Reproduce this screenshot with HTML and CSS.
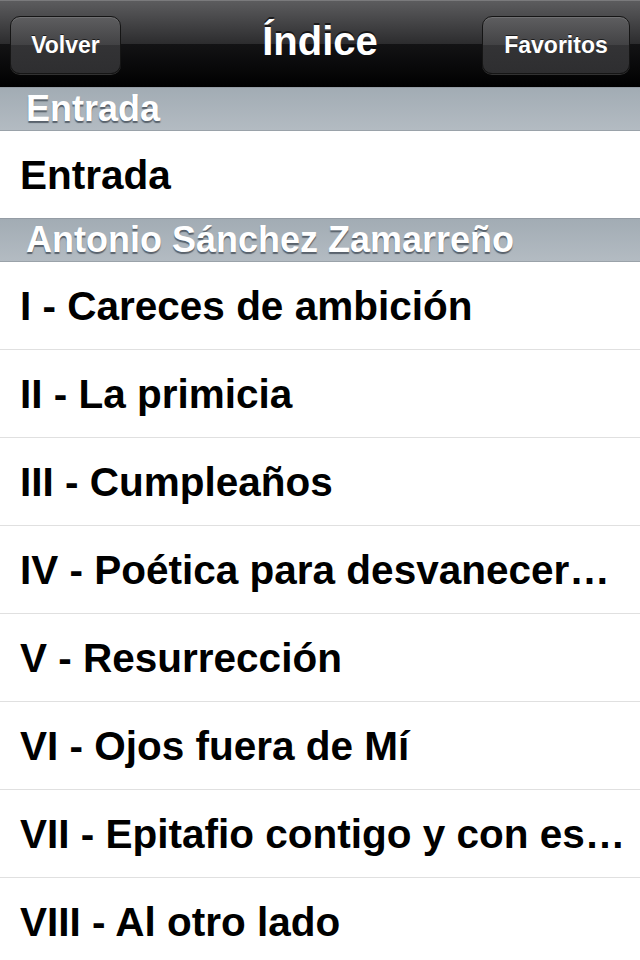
FILE: index.html
```html
<!DOCTYPE html>
<html lang="es">
<head>
    <meta charset="UTF-8">
    <title>Índice</title>
    <link rel="stylesheet" href="styles.css">
</head>
<body>
<div id="screen">
    <div class="navbar">
        <button class="nav-button back">Volver</button>
        <h1 class="nav-title">Índice</h1>
        <button class="nav-button fav">Favoritos</button>
    </div>
    <div class="section-header">Entrada</div>
    <ul class="rows">
        <li class="row">Entrada</li>
    </ul>
    <div class="section-header">Antonio Sánchez Zamarreño</div>
    <ul class="rows">
        <li class="row">I - Careces de ambición</li>
        <li class="row">II - La primicia</li>
        <li class="row">III - Cumpleaños</li>
        <li class="row">IV - Poética para desvanecer…</li>
        <li class="row">V - Resurrección</li>
        <li class="row">VI - Ojos fuera de Mí</li>
        <li class="row">VII - Epitafio contigo y con es…</li>
        <li class="row">VIII - Al otro lado</li>
    </ul>
</div>
</body>
</html>
```

FILE: styles.css
```css
body {
    margin: 0;
    background-color: #ffffff;
    font-family: "Liberation Sans", Arial, sans-serif;
}
#screen {
    width: 640px;
    height: 960px;
    overflow: hidden;
}
.navbar {
    height: 87px;
    display: grid;
    grid-template-columns: 1fr auto 1fr;
    align-items: center;
    padding: 0 10px;
    box-sizing: border-box;
    border-top: 1px solid #7a7a7c;
    background: linear-gradient(to bottom, #5c5c5e 0%, #2c2c2e 50%, #131315 50%, #000000 100%);
}
.nav-title {
    margin: 0 0 6px 0;
    color: #ffffff;
    font-size: 40px;
    font-weight: bold;
    text-shadow: 0 -2px 0 rgba(0, 0, 0, 0.6);
}
.nav-button {
    height: 58px;
    padding: 0;
    margin-top: 2px;
    border: 1px solid #151515;
    border-radius: 10px;
    color: #ffffff;
    font-family: "Liberation Sans", Arial, sans-serif;
    font-size: 23px;
    font-weight: bold;
    text-shadow: 0 -1px 0 rgba(0, 0, 0, 0.6);
    background: linear-gradient(to bottom, #5e5e60 0%, #424244 50%, #333335 50%, #2e2e30 100%);
    box-shadow: 0 1px 0 rgba(255, 255, 255, 0.18), inset 0 1px 0 rgba(255, 255, 255, 0.12);
}
.back {
    width: 111px;
    justify-self: start;
}
.fav {
    width: 148px;
    justify-self: end;
}
.section-header {
    height: 42px;
    line-height: 42px;
    padding-left: 26px;
    border-top: 1px solid #949ca4;
    border-bottom: 1px solid #9aa2a9;
    background: linear-gradient(to bottom, #a2acb4 0%, #b3bbc2 100%);
    color: #ffffff;
    font-size: 36px;
    font-weight: bold;
    text-shadow: 0 2px 1px rgba(60, 70, 80, 0.75);
    white-space: nowrap;
    overflow: hidden;
}
.rows {
    list-style: none;
    margin: 0;
    padding: 0;
}
.row {
    height: 87px;
    line-height: 89px;
    padding: 0 4px 0 20px;
    border-bottom: 1px solid #e0e0e0;
    color: #000000;
    font-size: 40.5px;
    font-weight: bold;
    white-space: nowrap;
    overflow: hidden;
    text-overflow: ellipsis;
}
.rows .row:last-child {
    border-bottom: none;
}
```
